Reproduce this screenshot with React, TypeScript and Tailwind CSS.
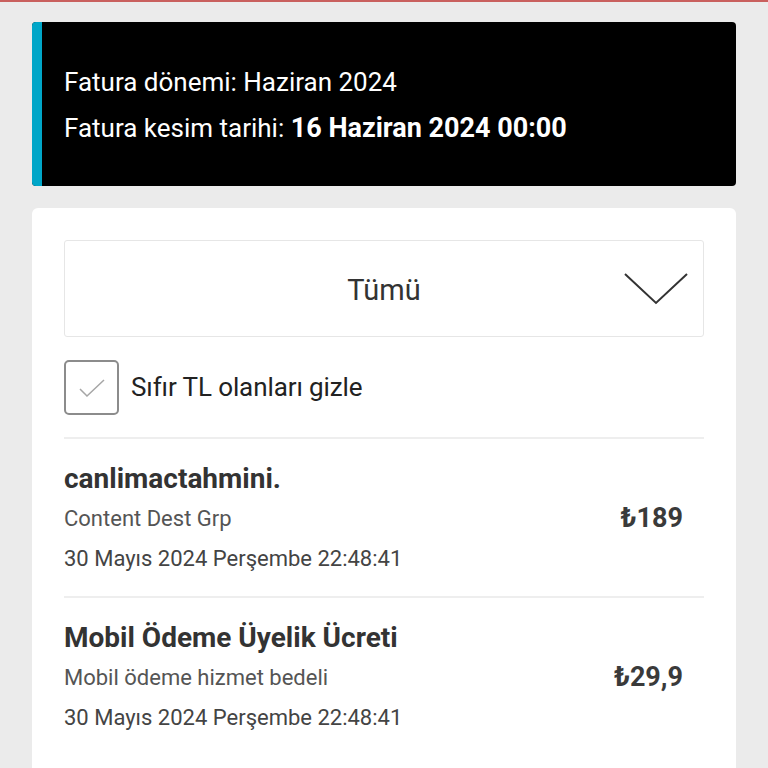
import React from "react";

const font = { fontFamily: "Roboto, 'Noto Sans', sans-serif" };

function Item({ title, sub, date, price }: { title: string; sub: string; date: string; price: string }) {
  return (
    <div className="flex items-center justify-between pt-[19px] pb-[17px]">
      <div className="flex flex-col">
        <div className="text-[28px] font-bold leading-[41px] text-[#333333]">{title}</div>
        <div className="text-[22px] leading-[40px] text-[#555555]">{sub}</div>
        <div className="text-[22px] leading-[40px] text-[#444444]">{date}</div>
      </div>
      <div className="pr-[21px] text-[27px] font-bold text-[#3a3a3a]">{price}</div>
    </div>
  );
}

export default function App() {
  return (
    <div style={font} className="w-[768px] h-[768px] overflow-hidden bg-[#ebebeb] border-t-2 border-[#c9605e]">
      <div className="px-[32px] pt-[20px]">
        <div className="flex h-[164px] rounded-[4px] overflow-hidden bg-black">
          <div className="w-[10px] bg-[#00a6c8]" />
          <div className="flex flex-col justify-center pl-[22px] gap-[2px] pt-[2px] text-white text-[26px] leading-[44px]">
            <div>Fatura dönemi: Haziran 2024</div>
            <div>
              Fatura kesim tarihi: <span className="font-bold text-[27px]">16 Haziran 2024 00:00</span>
            </div>
          </div>
        </div>
        <div className="mt-[22px] bg-white rounded-[6px] px-[32px] pt-[32px] h-[600px]">
          <div className="relative flex items-center justify-center h-[97px] border border-[#e6e6e6] rounded-[3px]">
            <span className="text-[29px] text-[#333333] pt-[4px]">Tümü</span>
            <svg className="absolute right-[15px] top-[32px]" width="64" height="32" viewBox="0 0 64 32">
              <polyline points="1,1 32,30 63,1" fill="none" stroke="#333333" strokeWidth="2" />
            </svg>
          </div>
          <div className="flex items-center gap-[12px] mt-[23px] mb-[22px]">
            <div className="flex items-center justify-center w-[55px] h-[55px] border-2 border-[#8c8c8c] rounded-[5px]">
              <svg width="30" height="22" viewBox="0 0 30 22">
                <polyline points="3,12 10,19 27,3" fill="none" stroke="#a6a6a6" strokeWidth="1.5" />
              </svg>
            </div>
            <span className="text-[26px] text-[#222222] tracking-[-0.1px]">Sıfır TL olanları gizle</span>
          </div>
          <div className="border-t-2 border-[#eeeeee]" />
          <Item title="canlimactahmini." sub="Content Dest Grp" date="30 Mayıs 2024 Perşembe 22:48:41" price="₺189" />
          <div className="border-t-2 border-[#eeeeee]" />
          <Item title="Mobil Ödeme Üyelik Ücreti" sub="Mobil ödeme hizmet bedeli" date="30 Mayıs 2024 Perşembe 22:48:41" price="₺29,9" />
        </div>
      </div>
    </div>
  );
}
